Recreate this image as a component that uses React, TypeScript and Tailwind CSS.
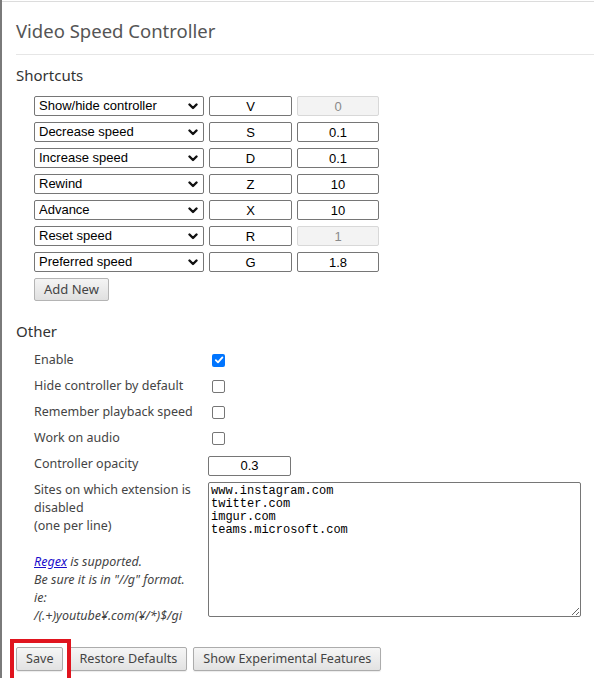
import React from "react";

const shortcuts = [
  { action: "Show/hide controller", key: "V", value: "0", disabled: true },
  { action: "Decrease speed", key: "S", value: "0.1" },
  { action: "Increase speed", key: "D", value: "0.1" },
  { action: "Rewind", key: "Z", value: "10" },
  { action: "Advance", key: "X", value: "10" },
  { action: "Reset speed", key: "R", value: "1", disabled: true },
  { action: "Preferred speed", key: "G", value: "1.8" },
];

const options = [
  "Show/hide controller",
  "Decrease speed",
  "Increase speed",
  "Rewind",
  "Advance",
  "Reset speed",
  "Preferred speed",
];

const ui = { fontFamily: '"Noto Sans", "Open Sans", sans-serif' };
const arial = { fontFamily: '"Liberation Sans", Arial, sans-serif' };
const mono = { fontFamily: '"Liberation Mono", "DejaVu Sans Mono", monospace' };

function Chevron() {
  return (
    <svg width="10" height="7" viewBox="0 0 10 7" className="pointer-events-none absolute right-[6px] top-[7px]">
      <path d="M1.5 1.5 L5 5 L8.5 1.5" fill="none" stroke="#111" strokeWidth="2.4" strokeLinecap="round" strokeLinejoin="round" />
    </svg>
  );
}

function Checkbox({ checked }: { checked?: boolean }) {
  if (checked) {
    return (
      <span className="ml-1 flex h-[13px] w-[13px] items-center justify-center rounded-[2px] bg-[#0075ff]">
        <svg width="10" height="10" viewBox="0 0 10 10">
          <path d="M1.8 5.2 L4 7.4 L8.4 2.4" fill="none" stroke="#fff" strokeWidth="1.8" strokeLinecap="round" strokeLinejoin="round" />
        </svg>
      </span>
    );
  }
  return <span className="ml-1 block h-[13px] w-[13px] rounded-[2px] border border-[#767676] bg-white" />;
}

function Btn({ children }: { children: React.ReactNode }) {
  return (
    <button
      className="h-6 rounded-[2px] border border-[#acacac] bg-[linear-gradient(#f6f6f6,#e2e2e2)] px-[9px] text-[12.6px] text-[#444] shadow-[0_1px_1px_rgba(0,0,0,0.08)]"
      style={ui}
    >
      {children}
    </button>
  );
}

export default function App() {
  return (
    <div className="h-[678px] w-[594px] overflow-hidden border-l-2 border-[#7a7a7a] bg-white">
      <div className="relative mt-px border-t border-[#dcdcdc] pl-[14px]">
        <h1 className="pt-4 text-[18.5px] leading-[26px] text-[#555]" style={ui}>
          Video Speed Controller
        </h1>
        <div className="mt-[10px] border-t border-[#e6e6e6]" />

        <h2 className="mt-[10px] text-[15px] leading-5 text-[#333]" style={ui}>
          Shortcuts
        </h2>
        <div className="ml-[18px] mt-[11px] flex flex-col gap-[6px]">
          {shortcuts.map((s) => (
            <div key={s.action} className="flex h-5 items-center gap-[5px]">
              <div className="relative h-5">
                <select
                  defaultValue={s.action}
                  className="block h-5 w-[170px] appearance-none rounded-[2px] border border-[#767676] bg-white pl-1 text-[13px] leading-[18px] text-black outline-none"
                  style={arial}
                >
                  {options.map((o) => (
                    <option key={o}>{o}</option>
                  ))}
                </select>
                <Chevron />
              </div>
              <input
                readOnly
                value={s.key}
                className="block h-5 w-[83px] rounded-[2px] border border-[#767676] bg-white text-center text-[13px] text-black outline-none"
                style={arial}
              />
              <input
                readOnly
                disabled={s.disabled}
                value={s.value}
                className={
                  s.disabled
                    ? "block h-5 w-[82px] rounded-[2px] border border-[#d8d8d8] bg-[#f3f3f3] text-center text-[13px] text-[#8a8a8a] outline-none"
                    : "block h-5 w-[82px] rounded-[2px] border border-[#767676] bg-white text-center text-[13px] text-black outline-none"
                }
                style={arial}
              />
            </div>
          ))}
          <div className="flex">
            <button
              className="block h-[23px] w-[75px] rounded-[2px] border border-[#b4b4b4] bg-[linear-gradient(#f4f4f4,#e0e0e0)] text-[13px] text-[#444]"
              style={ui}
            >
              Add New
            </button>
          </div>
        </div>

        <h2 className="mt-5 text-[15px] leading-5 text-[#333]" style={ui}>
          Other
        </h2>
        <div className="ml-[18px] mt-[9px] flex flex-col gap-[6px] text-[12.5px] text-[#444]" style={ui}>
          {[
            { label: "Enable", checked: true },
            { label: "Hide controller by default" },
            { label: "Remember playback speed" },
            { label: "Work on audio" },
          ].map((r) => (
            <div key={r.label} className="flex h-5 items-center">
              <span className="w-[174px]">{r.label}</span>
              <Checkbox checked={r.checked} />
            </div>
          ))}
          <div className="flex h-5 items-center">
            <span className="w-[174px]">Controller opacity</span>
            <input
              readOnly
              value="0.3"
              className="mt-[3px] block h-5 w-[83px] rounded-[2px] border border-[#767676] bg-white text-center text-[13px] text-black outline-none"
              style={arial}
            />
          </div>
          <div className="mt-[2px] flex items-start">
            <div className="-mt-[1px] w-[174px] pr-2 leading-[18px]">
              Sites on which extension is disabled
              <br />
              (one per line)
              <br />
              <br />
              <em>
                <a className="text-[#1a0dcc] underline">Regex</a> is supported.
                <br />
                Be sure it is in "//g" format.
                <br />
                ie:
                <br />
                /(.+)youtube¥.com(¥/*)$/gi
              </em>
            </div>
            <textarea
              readOnly
              value={"www.instagram.com\ntwitter.com\nimgur.com\nteams.microsoft.com"}
              className="block h-[135px] w-[373px] rounded-[2px] border border-[#767676] bg-white px-[2px] py-[2px] text-[12px] leading-[13px] text-black outline-none"
              style={mono}
            />
          </div>
        </div>

        <div className="mt-[22px] flex gap-[6px] pb-2">
          <Btn>Save</Btn>
          <Btn>Restore Defaults</Btn>
          <Btn>Show Experimental Features</Btn>
        </div>

        <div className="pointer-events-none absolute left-2 top-[637px] h-[50px] w-[61px] border-4 border-[#e0141e]" />
      </div>
    </div>
  );
}
